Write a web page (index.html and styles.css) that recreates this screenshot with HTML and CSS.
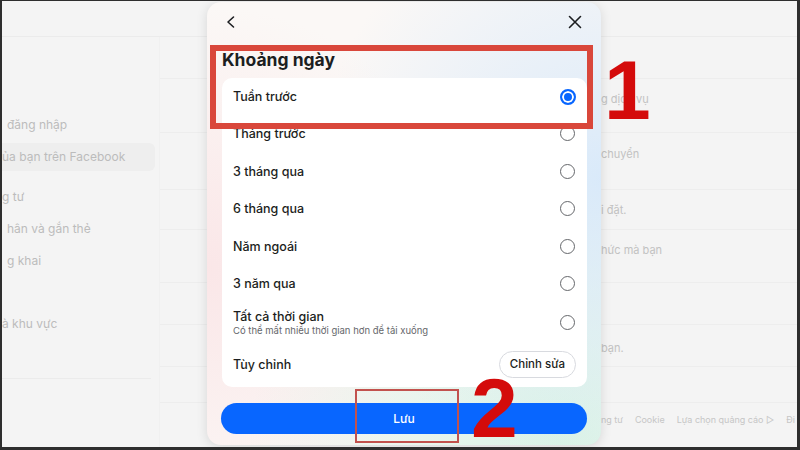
FILE: index.html
```html
<!DOCTYPE html>
<html lang="vi">
<head>
  <meta charset="UTF-8" />
  <meta name="viewport" content="width=device-width, initial-scale=1.0"/>
  <title>Khoảng ngày</title>
  <link rel="stylesheet" href="styles.css">
</head>
<body>
<div class="screen">

  <!-- faded page behind the dialog -->
  <div class="page">
    <div class="topbar"></div>
    <div class="main">
      <div class="sidebar">
        <div class="nav-item">đăng nhập</div>
        <div class="nav-item active">ủa bạn trên Facebook</div>
        <div class="nav-item section">g tư</div>
        <div class="nav-item">hân và gắn thẻ</div>
        <div class="nav-item">g khai</div>
        <div class="nav-item section-lg">à khu vực</div>
        <div class="side-line"></div>
      </div>
      <div class="content">
        <div class="row r1"></div>
        <div class="row r2"><span>g dịch vụ</span></div>
        <div class="row r3"><span>chuyển</span></div>
        <div class="row r4"><span>i đặt.</span></div>
        <div class="row r5"><span>hức mà bạn</span></div>
        <div class="row r6"></div>
        <div class="row r7"><span>bạn.</span></div>
        <div class="row r8"></div>
        <div class="footer">
          <span>ng tư</span>
          <span>Cookie</span>
          <span>Lựa chọn quảng cáo ▷</span>
          <span>Đi</span>
        </div>
      </div>
    </div>
  </div>

  <!-- dialog -->
  <div class="modal">
    <div class="modal-head">
      <svg class="icon" width="14" height="14" viewBox="0 0 14 14"><path d="M9.5 2 L4 7 L9.5 12" fill="none" stroke="#1c1e21" stroke-width="1.6" stroke-linecap="round" stroke-linejoin="round"/></svg>
      <svg class="icon" width="14" height="14" viewBox="0 0 14 14"><path d="M1.5 1.5 L12.5 12.5 M12.5 1.5 L1.5 12.5" fill="none" stroke="#1c1e21" stroke-width="1.6" stroke-linecap="round"/></svg>
    </div>
    <h2 class="title">Khoảng ngày</h2>
    <div class="card">
      <div class="option"><span>Tuần trước</span><span class="radio checked"></span></div>
      <div class="option"><span>Tháng trước</span><span class="radio"></span></div>
      <div class="option"><span>3 tháng qua</span><span class="radio"></span></div>
      <div class="option"><span>6 tháng qua</span><span class="radio"></span></div>
      <div class="option"><span>Năm ngoái</span><span class="radio"></span></div>
      <div class="option"><span>3 năm qua</span><span class="radio"></span></div>
      <div class="option tall">
        <div>
          <div>Tất cả thời gian</div>
          <div class="hint">Có thể mất nhiều thời gian hơn để tải xuống</div>
        </div>
        <span class="radio"></span>
      </div>
      <div class="option last"><span>Tùy chỉnh</span><button class="edit-btn">Chỉnh sửa</button></div>
    </div>
    <button class="save-btn">Lưu</button>
  </div>

  <!-- tutorial marks -->
  <div class="mark mark-1"></div>
  <div class="num num-1">1</div>
  <div class="mark mark-2"></div>
  <div class="num num-2">2</div>

</div>
</body>
</html>
```

FILE: styles.css
```css
* {
  box-sizing: border-box;
}

html, body {
  margin: 0;
  background: #2e2e2e;
}

body {
  font-family: Inter, "Noto Sans", sans-serif;
  width: 800px;
  height: 450px;
  overflow: hidden;
}

.screen {
  position: relative;
  margin: 1px 3px 0 2px;
  width: 795px;
  height: 446px;
  background: #f4f4f4;
  overflow: hidden;
}

/* background page */
.topbar {
  height: 36px;
  border-bottom: 1px solid #ebebeb;
}

.main {
  display: flex;
}

.sidebar {
  flex-shrink: 0;
  width: 158px;
  padding-top: 74px;
  border-right: 1px solid #f0f0f0;
  height: 410px;
}

.nav-item {
  height: 28px;
  line-height: 28px;
  margin-bottom: 4px;
  padding-left: 5px;
  font-size: 12px;
  color: #bcbcbc;
  border-radius: 0 6px 6px 0;
  margin-right: 4px;
  white-space: nowrap;
}

.nav-item.active {
  background: #eeeeee;
  padding-left: 0;
}

.nav-item.section {
  margin-top: 12px;
  padding-left: 0;
}

.nav-item.section-lg {
  margin-top: 35px;
  padding-left: 0;
}

.side-line {
  margin-top: 40px;
  border-top: 1px solid #ebebeb;
  margin-right: 8px;
}

.content {
  flex: 1;
  min-width: 0;
}

.row {
  border-bottom: 1px solid #ededed;
  padding-left: 441px;
  font-size: 11px;
  color: #c2c2c2;
  white-space: nowrap;
}

.r1 { height: 42px; }
.r2 { height: 54px; padding-top: 13px; }
.r3 { height: 57px; padding-top: 14px; }
.r4 { height: 40px; padding-top: 13px; }
.r5 { height: 53px; padding-top: 13px; }
.r6 { height: 42px; }
.r7 { height: 42px; padding-top: 16px; }
.r8 { height: 36px; }

.footer {
  display: flex;
  gap: 12px;
  padding: 11px 0 0 441px;
  font-size: 9px;
  color: #c6c6c6;
  white-space: nowrap;
}

/* dialog */
.modal {
  position: absolute;
  left: 205px;
  top: 1px;
  width: 394px;
  height: 443px;
  border-radius: 14px;
  padding: 0 14px 11px 15px;
  display: flex;
  flex-direction: column;
  background:
    radial-gradient(circle at 100% 40%, rgba(214, 232, 250, 0.9), rgba(214, 232, 250, 0) 60%),
    radial-gradient(circle at 90% 100%, rgba(214, 242, 228, 0.9), rgba(214, 242, 228, 0) 55%),
    radial-gradient(circle at 0% 60%, rgba(250, 226, 228, 0.8), rgba(250, 226, 228, 0) 55%),
    #fbf8f6;
  box-shadow: 0 2px 12px rgba(0, 0, 0, 0.12);
}

.modal-head {
  height: 40px;
  display: flex;
  align-items: center;
  justify-content: space-between;
  padding: 0 5px 0 2px;
}

.icon {
  display: block;
}

.title {
  margin: 0;
  height: 36px;
  display: flex;
  align-items: center;
  font-size: 17.5px;
  font-weight: 700;
  color: #1c1e21;
}

.card {
  background: #fff;
  border-radius: 10px;
  height: 310px;
  padding: 0 11px;
}

.option {
  height: 37.4px;
  display: flex;
  align-items: center;
  justify-content: space-between;
  font-size: 12.5px;
  font-weight: 500;
  color: #1c1e21;
}

.option.tall {
  height: 40px;
}

.option.last {
  height: 44px;
}

.hint {
  font-size: 9.5px;
  font-weight: 400;
  color: #65676b;
  margin-top: 1px;
}

.radio {
  width: 15px;
  height: 15px;
  border: 1.5px solid #65676b;
  border-radius: 50%;
  margin-right: 1px;
}

.radio.checked {
  width: 16px;
  height: 16px;
  border: 2px solid #0866ff;
  background: #0866ff;
  box-shadow: inset 0 0 0 2px #fff;
  margin-right: 0;
}

.edit-btn {
  height: 27px;
  padding: 0 10px;
  border: 1px solid #d8dadf;
  border-radius: 14px;
  background: #fff;
  font-family: inherit;
  font-size: 11.5px;
  font-weight: 500;
  color: #1c1e21;
}

.save-btn {
  margin-top: 16px;
  height: 31px;
  width: calc(100% + 1px);
  margin-left: -1px;
  border: none;
  border-radius: 16px;
  background: #0866ff;
  color: #fff;
  font-family: inherit;
  font-size: 12px;
  font-weight: 500;
}

/* tutorial marks */
.mark {
  position: absolute;
}

.mark-1 {
  left: 208px;
  top: 44px;
  width: 383px;
  height: 84px;
  border: 6px solid #d9473b;
}

.mark-2 {
  left: 353px;
  top: 388px;
  width: 104px;
  height: 54px;
  border: 2.5px solid #c2524e;
}

.num {
  position: absolute;
  font-family: "Liberation Sans", Arial, sans-serif;
  font-weight: 700;
  font-size: 84px;
  line-height: 1;
  color: #d40b0b;
}

.num-1 {
  left: 602px;
  top: 47px;
}

.num-2 {
  left: 469px;
  top: 365px;
}
```
